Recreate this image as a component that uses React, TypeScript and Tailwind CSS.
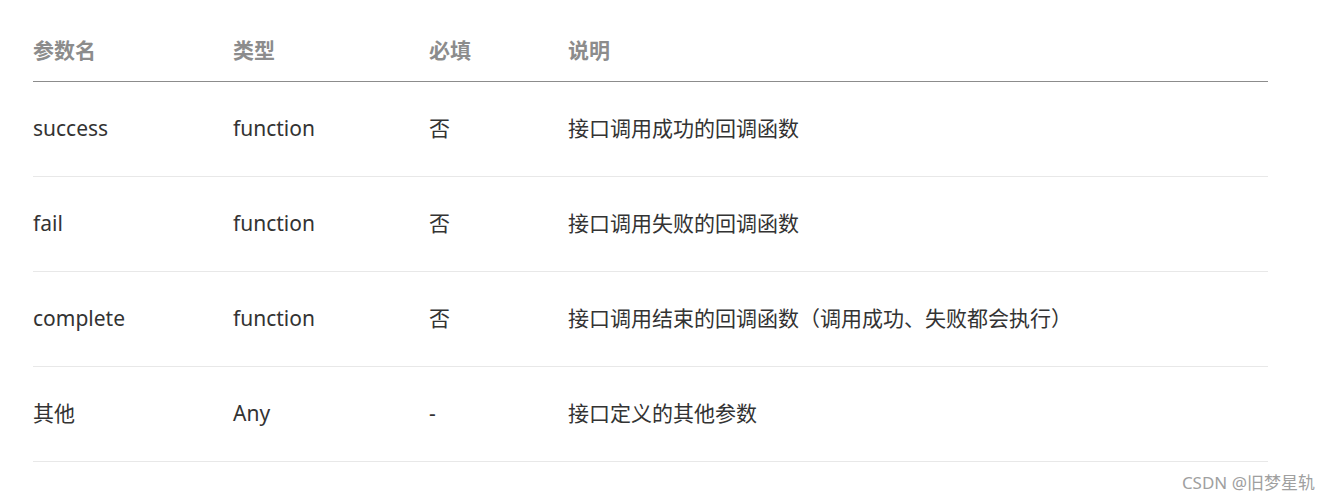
export default function App() {
  const rows = [
    ["success", "function", "否", "接口调用成功的回调函数"],
    ["fail", "function", "否", "接口调用失败的回调函数"],
    ["complete", "function", "否", "接口调用结束的回调函数（调用成功、失败都会执行）"],
    ["其他", "Any", "-", "接口定义的其他参数"],
  ];
  const font = { fontFamily: '"Noto Sans", "Noto Sans CJK SC", sans-serif' };
  return (
    <div className="relative w-[1330px] h-[502px] bg-white overflow-hidden" style={font}>
      <div className="ml-[33px] w-[1235px] pt-[20px]">
        <div className="flex items-center h-[62px] border-b border-[#8c8c8c] text-[21px] font-bold text-[#8c8c8c]">
          <div className="w-[200px]">参数名</div>
          <div className="w-[196px]">类型</div>
          <div className="w-[139px]">必填</div>
          <div>说明</div>
        </div>
        {rows.map((r, i) => (
          <div key={i} className="flex items-center h-[95px] border-b border-[#e8e8e8] text-[21px] text-[#333333]">
            <div className="w-[200px]">{r[0]}</div>
            <div className="w-[196px]">{r[1]}</div>
            <div className="w-[139px]">{r[2]}</div>
            <div>{r[3]}</div>
          </div>
        ))}
      </div>
      <div className="absolute right-[15px] bottom-[7px] text-[17px] text-[#a0a0a0]">CSDN @旧梦星轨</div>
    </div>
  );
}
